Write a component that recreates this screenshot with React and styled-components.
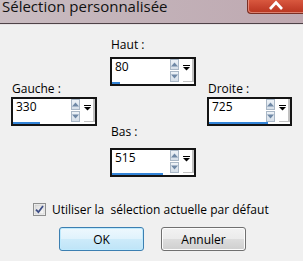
import styled, { createGlobalStyle } from 'styled-components'

const GlobalStyle = createGlobalStyle`
  html, body {
    margin: 0;
    padding: 0;
    background: #f0f0f0;
  }
  body {
    font-family: "Open Sans", "Liberation Sans", sans-serif;
    color: #000;
  }
`

const Window = styled.div`
  width: 303px;
  height: 261px;
  display: flex;
  flex-direction: column;
  background: #f0f0f0;
  overflow: hidden;
`

const TitleBar = styled.div`
  height: 23px;
  display: flex;
  justify-content: space-between;
  align-items: flex-start;
  background: linear-gradient(90deg, #c9bcc1 0%, #c2b1b8 50%, #bfa9b1 100%);
  border-bottom: 1px solid #4e4247;
  box-shadow: 0 1px 0 #e6e2e4;
`

const Title = styled.div`
  font-size: 15px;
  line-height: 15px;
  padding-left: 2px;
  margin-top: -1px;
  color: #111;
`

const CloseButton = styled.div`
  width: 55px;
  height: 13px;
  display: flex;
  justify-content: center;
  align-items: flex-start;
  background: linear-gradient(180deg, #d9583f 0%, #c5412c 60%, #b8361f 100%);
  border-left: 1px solid #7a2f24;
  border-bottom: 1px solid #7a2f24;
  border-bottom-left-radius: 4px;
  box-shadow: inset 1px -1px 0 rgba(255, 200, 190, 0.5);
`

const Grid = styled.div`
  display: grid;
  grid-template-columns: 99px 97px 86px;
  padding: 13px 0 0 11px;
  align-items: start;
`

const Column = styled.div`
  display: flex;
  flex-direction: column;
  margin-top: ${p => p.$top || 0}px;
`

const FieldWrap = styled.div`
  display: flex;
  flex-direction: column;
  margin-top: ${p => p.$top || 0}px;
`

const Label = styled.div`
  font-size: 12px;
  line-height: 15px;
  padding-left: 1px;
  margin-bottom: ${p => p.$gap}px;
`

const Box = styled.div`
  width: ${p => p.$width}px;
  height: 29px;
  box-sizing: border-box;
  border: 2px solid #141414;
  background: #fff;
  display: flex;
  flex-direction: column;
`

const InputRow = styled.div`
  flex: 1;
  display: flex;
  min-height: 0;
`

const Value = styled.div`
  flex: 1;
  font-size: 12px;
  line-height: 15px;
  padding-left: 3px;
`

const Arrows = styled.div`
  width: 9px;
  display: flex;
  flex-direction: column;
  gap: 1px;
  margin-right: 4px;
`

const ArrowButton = styled.div`
  height: 11px;
  box-sizing: border-box;
  border: 1px solid #a9b7c6;
  background: linear-gradient(180deg, #edf2f7 0%, #d6dfe9 100%);
  display: flex;
  align-items: center;
  justify-content: center;
`

const Drop = styled.div`
  width: 11px;
  box-sizing: border-box;
  border-right: 2px solid #c2c2c2;
  border-bottom: 1px solid #c2c2c2;
  padding-top: 6px;
  display: flex;
  justify-content: flex-start;
  align-items: flex-start;
`

const Track = styled.div`
  height: 2px;
  background: #fff;
`

const Fill = styled.div`
  height: 100%;
  background: #3485d9;
`

const CheckRow = styled.label`
  display: flex;
  align-items: center;
  gap: 6px;
  margin: 26px 0 0 33px;
  height: 13px;
  font-size: 12px;
  white-space: pre;
`

const ButtonRow = styled.div`
  display: flex;
  gap: 17px;
  margin: 11px 0 0 59px;
`

const Button = styled.div`
  width: 85px;
  height: 24px;
  box-sizing: border-box;
  border-radius: 3px;
  display: flex;
  align-items: center;
  justify-content: center;
  font-size: 12px;
  border: 1px solid ${p => (p.$primary ? '#3c7fb1' : '#707070')};
  background: ${p =>
    p.$primary
      ? 'linear-gradient(180deg, #eef8fd 0%, #dff2fc 50%, #cdebfa 50%, #bfe4f7 100%)'
      : 'linear-gradient(180deg, #f2f2f2 0%, #ebebeb 50%, #dddddd 50%, #cfcfcf 100%)'};
  box-shadow: inset 0 0 0 1px ${p => (p.$primary ? '#bfeafd' : '#fcfcfc')};
`

function UpArrow() {
  return (
    <svg width="7" height="5" viewBox="0 0 7 5">
      <polygon points="0,4.5 3.5,0.5 7,4.5" fill="#6f88a6" />
    </svg>
  )
}

function DownArrow() {
  return (
    <svg width="7" height="5" viewBox="0 0 7 5">
      <polygon points="0,0.5 7,0.5 3.5,4.5" fill="#6f88a6" />
    </svg>
  )
}

function DropGlyph() {
  return (
    <svg width="7" height="6" viewBox="0 0 7 6">
      <rect x="0" y="0" width="7" height="1" fill="#000" />
      <polygon points="0,2 7,2 3.5,5.5" fill="#000" />
    </svg>
  )
}

function SpinField({ label, value, max, gap, width = 86, top }) {
  const track = width - 4
  return (
    <FieldWrap $top={top}>
      <Label $gap={gap}>{label}</Label>
      <Box $width={width}>
        <InputRow>
          <Value>{value}</Value>
          <Arrows>
            <ArrowButton><UpArrow /></ArrowButton>
            <ArrowButton><DownArrow /></ArrowButton>
          </Arrows>
          <Drop><DropGlyph /></Drop>
        </InputRow>
        <Track>
          <Fill style={{ width: Math.round((value / max) * track) + 'px' }} />
        </Track>
      </Box>
    </FieldWrap>
  )
}

function Checkbox() {
  return (
    <svg width="13" height="13" viewBox="0 0 13 13">
      <defs>
        <linearGradient id="cbg" x1="0" y1="0" x2="1" y2="1">
          <stop offset="0" stopColor="#dcdcdc" />
          <stop offset="1" stopColor="#fafafa" />
        </linearGradient>
      </defs>
      <rect x="0.5" y="0.5" width="12" height="12" fill="#f6f6f6" stroke="#8e8f8f" />
      <rect x="2" y="2" width="9" height="9" fill="url(#cbg)" stroke="#c6c6c6" strokeWidth="0.6" />
      <path d="M3 6.6 L5.4 9.2 L10 3" fill="none" stroke="#3d4e86" strokeWidth="1.8" />
    </svg>
  )
}

export default function App() {
  return (
    <>
      <GlobalStyle />
      <Window>
        <TitleBar>
          <Title>Sélection personnalisée</Title>
          <CloseButton>
            <svg width="18" height="10" viewBox="0 0 18 10">
              <path d="M3 9 L9 2.5 L15 9" fill="none" stroke="#fff" strokeWidth="2.6" />
            </svg>
          </CloseButton>
        </TitleBar>
        <Grid>
          <Column $top={44}>
            <SpinField label="Gauche :" value={330} max={1000} gap={1} />
          </Column>
          <Column>
            <SpinField label="Haut :" value={80} max={830} gap={5} />
            <SpinField label="Bas :" value={515} max={830} gap={9} top={38} />
          </Column>
          <Column $top={44}>
            <SpinField label="Droite :" value={725} max={1000} gap={1} width={85} />
          </Column>
        </Grid>
        <CheckRow>
          <Checkbox />
          <span>Utiliser la  sélection actuelle par défaut</span>
        </CheckRow>
        <ButtonRow>
          <Button $primary>OK</Button>
          <Button>Annuler</Button>
        </ButtonRow>
      </Window>
    </>
  )
}
